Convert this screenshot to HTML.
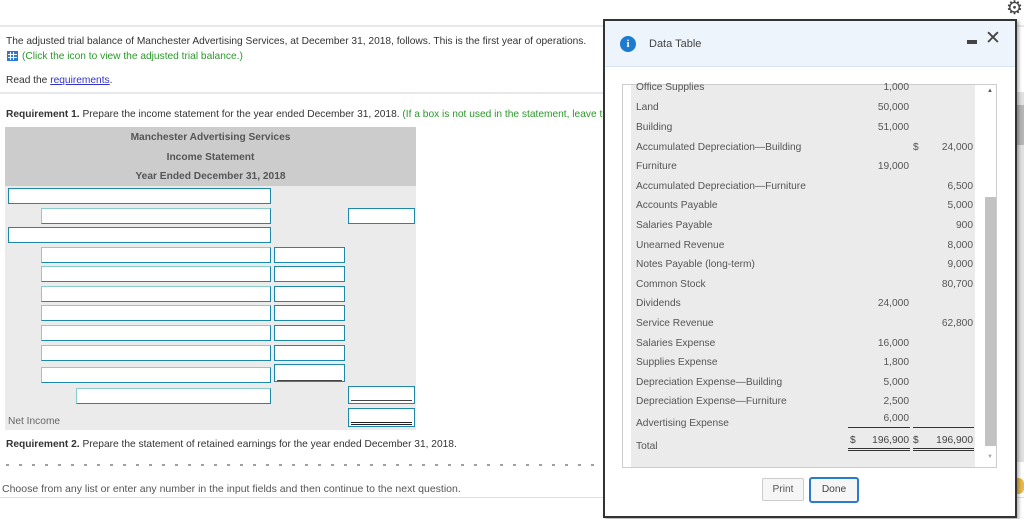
<!DOCTYPE html>
<html><head><meta charset="utf-8"><style>
*{margin:0;padding:0;box-sizing:border-box}
body{width:1024px;height:519px;position:relative;overflow:hidden;background:#fff;font-family:"Liberation Sans",sans-serif;font-size:10.2px;color:#333}
.a{position:absolute;white-space:nowrap}
.in{position:absolute;background:#fff;border:1px solid #1e88a8;height:16px}
.in2{position:absolute;background:#fff;border:1px solid #1e88a8;border-left-color:#8cc;border-top-color:#8cc;height:16px}
.t{position:absolute;white-space:nowrap;color:#555;font-size:10.2px}
.r{text-align:right}
</style></head><body>
<div class="a" style="left:0;top:25px;width:1024px;height:2px;background:#e6e8ec"></div>
<div class="a" style="left:6px;top:36px">The adjusted trial balance of Manchester Advertising Services, at December 31, 2018, follows. This is the first year of operations.</div>
<div class="a" style="left:7px;top:51px;width:11px;height:10px;background:#2a7ad1;border:1px solid #2a7ad1">
<div style="position:absolute;left:2px;top:0;width:1px;height:8px;background:#fff"></div><div style="position:absolute;left:5px;top:0;width:1px;height:8px;background:#fff"></div>
<div style="position:absolute;left:0;top:2px;width:9px;height:1px;background:#fff"></div><div style="position:absolute;left:0;top:5px;width:9px;height:1px;background:#fff"></div></div>
<div class="a" style="left:22px;top:51px;color:#2a9a2a">(Click the icon to view the adjusted trial balance.)</div>
<div class="a" style="left:6px;top:75px">Read the <span style="color:#33c;text-decoration:underline">requirements</span>.</div>
<div class="a" style="left:0;top:92px;width:1024px;height:2px;background:#e6e8ec"></div>
<div class="a" style="left:6px;top:109px"><b>Requirement 1.</b> Prepare the income statement for the year ended December 31, 2018. <span style="color:#2a9a2a">(If a box is not used in the statement, leave t</span></div>
<div class="a" style="left:5px;top:127px;width:411px;height:59px;background:#ccc"></div>
<div class="a" style="left:5px;top:186px;width:411px;height:244px;background:#ebebeb"></div>
<div class="a" style="left:5px;top:132px;width:411px;text-align:center;font-weight:bold;color:#555">Manchester Advertising Services</div>
<div class="a" style="left:5px;top:152px;width:411px;text-align:center;font-weight:bold;color:#555">Income Statement</div>
<div class="a" style="left:5px;top:171px;width:411px;text-align:center;font-weight:bold;color:#555">Year Ended December 31, 2018</div>
<div class="in" style="left:8px;top:188px;width:263px"></div>
<div class="in2" style="left:41px;top:208px;width:230px"></div><div class="in" style="left:348px;top:208px;width:67px"></div>
<div class="in" style="left:8px;top:227px;width:263px"></div>
<div class="in2" style="left:41px;top:247px;width:230px"></div><div class="in" style="left:274px;top:247px;width:71px"></div>
<div class="in2" style="left:41px;top:266px;width:230px"></div><div class="in" style="left:274px;top:266px;width:71px"></div>
<div class="in2" style="left:41px;top:286px;width:230px"></div><div class="in" style="left:274px;top:286px;width:71px"></div>
<div class="in2" style="left:41px;top:305px;width:230px"></div><div class="in" style="left:274px;top:305px;width:71px"></div>
<div class="in2" style="left:41px;top:325px;width:230px"></div><div class="in" style="left:274px;top:325px;width:71px"></div>
<div class="in2" style="left:41px;top:345px;width:230px"></div><div class="in" style="left:274px;top:345px;width:71px"></div>
<div class="in2" style="left:41px;top:367px;width:230px"></div><div class="in" style="left:274px;top:364px;width:71px;height:18px"><div style="position:absolute;left:2px;right:2px;bottom:0;height:1px;background:#444"></div></div>
<div class="in2" style="left:76px;top:388px;width:195px"></div><div class="in" style="left:348px;top:386px;width:67px;height:18px"><div style="position:absolute;left:2px;right:2px;bottom:2px;height:1px;background:#444"></div></div>
<div class="t" style="left:8px;top:416px;color:#666">Net Income</div>
<div class="in" style="left:348px;top:408px;width:67px;height:19px"><div style="position:absolute;left:2px;right:2px;bottom:3px;height:1px;background:#222"></div><div style="position:absolute;left:2px;right:2px;bottom:1px;height:1px;background:#222"></div></div>
<div class="a" style="left:6px;top:439px"><b>Requirement 2.</b> Prepare the statement of retained earnings for the year ended December 31, 2018.</div>
<div class="a" style="left:6px;top:464px;width:596px;height:2px;background:repeating-linear-gradient(90deg,#777 0 3px,transparent 3px 13px);opacity:.7"></div>
<div class="a" style="left:2px;top:483px;color:#555;font-size:10.5px">Choose from any list or enter any number in the input fields and then continue to the next question.</div>
<div class="a" style="left:0;top:497px;width:1024px;height:1px;background:#dde"></div>
<div class="a" style="left:1017px;top:92px;width:7px;height:370px;background:#e0e0e0"></div>
<div class="a" style="left:1017px;top:105px;width:7px;height:40px;background:#b5b5b5"></div>
<div class="a" style="left:1013px;top:478px;width:11px;height:16px;border-radius:8px;background:#e8b84a"></div>
<div class="a" style="left:1006px;top:-3px;font-size:19px;color:#444">⚙</div>
<div class="a" style="left:603px;top:19px;width:414px;height:499px;border:2px solid #333;background:#fff;box-shadow:2px 2px 3px rgba(0,0,0,.3)">
<div style="position:absolute;left:0;top:0;width:410px;height:46px;background:#eef4fb;border-bottom:1px solid #d8e6f4"></div>
<div style="position:absolute;left:15px;top:15px;width:16px;height:16px;border-radius:8px;background:#1a7bd0;color:#fff;font-weight:bold;font-size:11px;text-align:center;line-height:16px;font-family:'Liberation Serif',serif">i</div>
<div style="position:absolute;left:44px;top:17px;font-size:11px;color:#444">Data Table</div>
<div style="position:absolute;left:362px;top:19px;width:10px;height:4px;background:#444"></div>
<div style="position:absolute;left:380px;top:6px;font-size:19px;color:#444">✕</div>
</div>
<div class="a" style="left:622px;top:84px;width:375px;height:384px;border:1px solid #ccc;background:#fff;overflow:hidden">
<div style="position:absolute;left:8px;top:0;width:344px;height:383px;background:#ebebeb"></div>
<div style="position:absolute;left:362px;top:112px;width:11px;height:249px;background:#c2c2c2"></div>
<div style="position:absolute;left:364px;top:3px;font-size:6px;color:#555">▲</div>
<div style="position:absolute;left:364px;top:369px;font-size:6px;color:#aaa">▼</div>
</div>
<div class="t" style="left:636px;top:82px">Office Supplies</div><div class="t r" style="left:850px;top:82px;width:59px">1,000</div>
<div class="t" style="left:636px;top:102px">Land</div><div class="t r" style="left:850px;top:102px;width:59px">50,000</div>
<div class="t" style="left:636px;top:122px">Building</div><div class="t r" style="left:850px;top:122px;width:59px">51,000</div>
<div class="t" style="left:636px;top:142px">Accumulated Depreciation—Building</div><div class="t" style="left:913px;top:142px">$</div><div class="t r" style="left:920px;top:142px;width:53px">24,000</div>
<div class="t" style="left:636px;top:161px">Furniture</div><div class="t r" style="left:850px;top:161px;width:59px">19,000</div>
<div class="t" style="left:636px;top:181px">Accumulated Depreciation—Furniture</div><div class="t r" style="left:920px;top:181px;width:53px">6,500</div>
<div class="t" style="left:636px;top:200px">Accounts Payable</div><div class="t r" style="left:920px;top:200px;width:53px">5,000</div>
<div class="t" style="left:636px;top:220px">Salaries Payable</div><div class="t r" style="left:920px;top:220px;width:53px">900</div>
<div class="t" style="left:636px;top:240px">Unearned Revenue</div><div class="t r" style="left:920px;top:240px;width:53px">8,000</div>
<div class="t" style="left:636px;top:259px">Notes Payable (long-term)</div><div class="t r" style="left:920px;top:259px;width:53px">9,000</div>
<div class="t" style="left:636px;top:279px">Common Stock</div><div class="t r" style="left:920px;top:279px;width:53px">80,700</div>
<div class="t" style="left:636px;top:298px">Dividends</div><div class="t r" style="left:850px;top:298px;width:59px">24,000</div>
<div class="t" style="left:636px;top:318px">Service Revenue</div><div class="t r" style="left:920px;top:318px;width:53px">62,800</div>
<div class="t" style="left:636px;top:338px">Salaries Expense</div><div class="t r" style="left:850px;top:338px;width:59px">16,000</div>
<div class="t" style="left:636px;top:357px">Supplies Expense</div><div class="t r" style="left:850px;top:357px;width:59px">1,800</div>
<div class="t" style="left:636px;top:377px">Depreciation Expense—Building</div><div class="t r" style="left:850px;top:377px;width:59px">5,000</div>
<div class="t" style="left:636px;top:396px">Depreciation Expense—Furniture</div><div class="t r" style="left:850px;top:396px;width:59px">2,500</div>
<div class="t" style="left:636px;top:418px">Advertising Expense</div><div class="t r" style="left:850px;top:413px;width:59px">6,000</div>
<div class="a" style="left:848px;top:427px;width:62px;height:1px;background:#333"></div>
<div class="a" style="left:913px;top:427px;width:61px;height:1px;background:#333"></div>
<div class="t" style="left:636px;top:441px">Total</div>
<div class="t" style="left:850px;top:435px;color:#444">$</div><div class="t r" style="left:860px;top:435px;width:49px;color:#444">196,900</div>
<div class="t" style="left:913px;top:435px;color:#444">$</div><div class="t r" style="left:920px;top:435px;width:53px;color:#444">196,900</div>
<div class="a" style="left:848px;top:448px;width:62px;height:3px;border-top:1px solid #333;border-bottom:1px solid #333"></div>
<div class="a" style="left:913px;top:448px;width:61px;height:3px;border-top:1px solid #333;border-bottom:1px solid #333"></div>
<div class="a" style="left:762px;top:478px;width:42px;height:23px;border:1px solid #ccc;border-radius:2px;background:#f6f6f6;text-align:center;line-height:21px;color:#555">Print</div>
<div class="a" style="left:809px;top:477px;width:50px;height:26px;border:2px solid #2a7ad1;border-radius:3px;background:#f6f6f6;text-align:center;line-height:22px;color:#444">Done</div>
</body></html>
